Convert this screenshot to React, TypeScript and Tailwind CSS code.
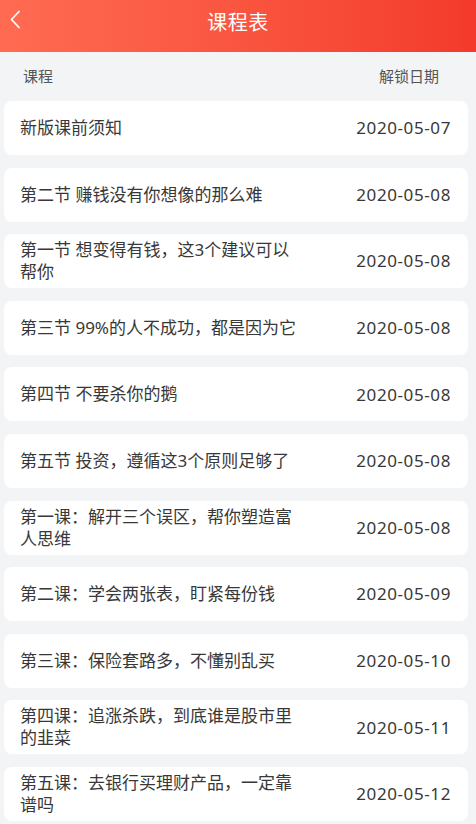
const lessons = [
  { title: "新版课前须知", date: "2020-05-07" },
  { title: "第二节 赚钱没有你想像的那么难", date: "2020-05-08" },
  { title: "第一节 想变得有钱，这3个建议可以帮你", date: "2020-05-08" },
  { title: "第三节 99%的人不成功，都是因为它", date: "2020-05-08" },
  { title: "第四节 不要杀你的鹅", date: "2020-05-08" },
  { title: "第五节 投资，遵循这3个原则足够了", date: "2020-05-08" },
  { title: "第一课：解开三个误区，帮你塑造富人思维", date: "2020-05-08" },
  { title: "第二课：学会两张表，盯紧每份钱", date: "2020-05-09" },
  { title: "第三课：保险套路多，不懂别乱买", date: "2020-05-10" },
  { title: "第四课：追涨杀跌，到底谁是股市里的韭菜", date: "2020-05-11" },
  { title: "第五课：去银行买理财产品，一定靠谱吗", date: "2020-05-12" },
];

export default function App() {
  return (
    <div
      className="w-[476px] h-[824px] overflow-hidden bg-[#f3f4f6]"
      style={{ fontFamily: '"Noto Sans", "Noto Sans CJK SC", sans-serif' }}
    >
      <header className="relative h-[52px] flex items-center justify-center bg-gradient-to-r from-[#ff6b52] to-[#f33a2b]">
        <svg
          className="absolute left-[9px] top-[10px]"
          width="12"
          height="19"
          viewBox="0 0 12 19"
          fill="none"
        >
          <path d="M10 1.5 L2.5 9.5 L10 17.5" stroke="#fff" strokeWidth="1.8" strokeLinecap="round" strokeLinejoin="round" />
        </svg>
        <h1 className="text-white text-[20px] leading-none -mt-[6px] tracking-[0.5px]">课程表</h1>
      </header>

      <div className="flex justify-between items-center h-[49px] pl-[23px] pr-[37px] text-[15px] text-[#555]">
        <span>课程</span>
        <span>解锁日期</span>
      </div>

      <ul className="flex flex-col gap-[12.6px] pl-[4px] pr-[8px]">
        {lessons.map((l, i) => (
          <li
            key={i}
            className="h-[54px] bg-white rounded-[8px] flex items-center justify-between pl-[16px] pr-[17px]"
          >
            <span className="w-[279px] text-[17px] leading-[22px] text-[#383838]">{l.title}</span>
            <span className="text-[17px] text-[#383838] tracking-[0.6px]">{l.date}</span>
          </li>
        ))}
      </ul>
    </div>
  );
}
